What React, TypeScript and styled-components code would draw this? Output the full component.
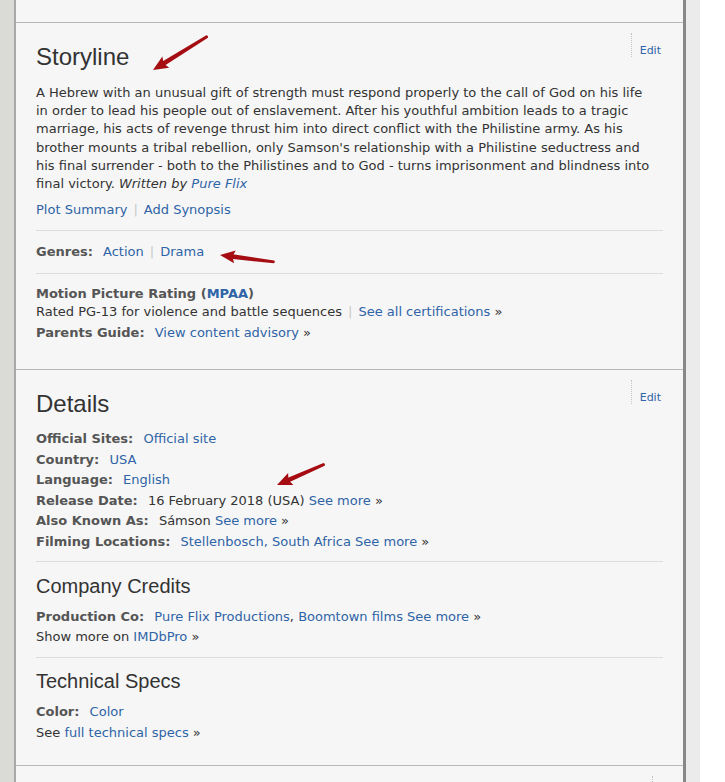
import React from "react";
import styled, { createGlobalStyle } from "styled-components";

const Global = createGlobalStyle`
  html, body { margin: 0; padding: 0; background: #ffffff; overflow: hidden; }
  body { font-family: Verdana, "DejaVu Sans", sans-serif; font-size: 13px; color: #333; }
  #root { width: 725px; height: 782px; }
`;

const Page = styled.div`
  position: relative;
  display: flex;
  width: 700px;
  height: 782px;
  overflow: hidden;
`;

const Gutter = styled.div<{ $side: "left" | "right" }>`
  flex: none;
  width: 14px;
  background: ${(p) => (p.$side === "left" ? "#dadad6" : "#ebebeb")};
`;

const Main = styled.main`
  flex: none;
  width: 667px;
  background: #f6f6f6;
  border-left: 2px solid #a8a8a8;
  border-right: 3px solid #878787;
`;

const Stub = styled.div`
  height: 22px;
  border-bottom: 1px solid #b8b8b8;
`;

const Section = styled.section<{ $pb: number }>`
  padding: 10px 20px ${(p) => p.$pb}px;
  border-bottom: 1px solid #b8b8b8;
`;

const Header = styled.div`
  display: flex;
  justify-content: space-between;
  align-items: flex-start;
`;

const Title = styled.h2`
  margin: 10px 0 0;
  font-family: Arial, "Liberation Sans", sans-serif;
  font-weight: normal;
  font-size: 24px;
  line-height: 28px;
  color: #333;
`;

const SubTitle = styled.h3`
  margin: 0;
  font-family: Arial, "Liberation Sans", sans-serif;
  font-weight: normal;
  font-size: 20px;
  line-height: 24px;
  color: #333;
`;

const Edit = styled.a`
  display: block;
  height: 24px;
  box-sizing: border-box;
  padding: 11px 2px 0 8px;
  margin-left: auto;
  border-left: 1px dotted #c4c4c4;
  font-size: 11px;
  line-height: 14px;
  color: #2f64a6;
  text-decoration: none;
  overflow: hidden;
`;

const Para = styled.p<{ $mt: number }>`
  margin: ${(p) => p.$mt}px 0 0;
  line-height: 18.2px;
`;

const Link = styled.a<{ $bold?: boolean }>`
  color: #2f64a6;
  text-decoration: none;
  font-weight: ${(p) => (p.$bold ? "bold" : "inherit")};
`;

const Sep = styled.span`
  color: #c8c8c8;
  padding: 0 6px;
`;

const Divider = styled.hr<{ $mt: number; $mb: number }>`
  border: 0;
  border-top: 1px solid #dddddd;
  height: 0;
  margin: ${(p) => p.$mt}px 0 ${(p) => p.$mb}px;
`;

const Label = styled.span`
  font-weight: bold;
  color: #555;
  margin-right: 6px;
`;

const BlockLabel = styled.h4`
  margin: 0;
  font-size: 13px;
  line-height: 18.2px;
  font-weight: bold;
  color: #555;
`;

const Rows = styled.div<{ $mt: number }>`
  margin-top: ${(p) => p.$mt}px;
  display: flex;
  flex-direction: column;
`;

const Row = styled.div`
  line-height: 20.6px;
  white-space: nowrap;
`;

const Raquo = styled.span`
  color: #333;
`;

const ArrowLayer = styled.svg`
  position: absolute;
  left: 0;
  top: 0;
  pointer-events: none;
`;

type Pt = { x: number; y: number };

function Arrow({ tip, tail }: { tip: Pt; tail: Pt }) {
  const dx = tail.x - tip.x;
  const dy = tail.y - tip.y;
  const L = Math.sqrt(dx * dx + dy * dy);
  const ang = (Math.atan2(dy, dx) * 180) / Math.PI;
  return (
    <g transform={`translate(${tip.x} ${tip.y}) rotate(${ang})`}>
      <polygon
        points={`11,-2.4 ${L - 1},-1.5 ${L},0 ${L - 1},1.5 11,2.4`}
        fill="#a50d12"
      />
      <polygon points="0,0 15,-6.5 12.5,0 15,6.5" fill="#a50d12" />
    </g>
  );
}

const label = (t: string) => <Label>{t}</Label>;

const storyLines = [
  "A Hebrew with an unusual gift of strength must respond properly to the call of God on his life",
  "in order to lead his people out of enslavement. After his youthful ambition leads to a tragic",
  "marriage, his acts of revenge thrust him into direct conflict with the Philistine army. As his",
  "brother mounts a tribal rebellion, only Samson's relationship with a Philistine seductress and",
  "his final surrender - both to the Philistines and to God - turns imprisonment and blindness into",
];

export default function App() {
  return (
    <>
      <Global />
      <Page>
        <Gutter $side="left" />
        <Main>
          <Stub />
          <Section $pb={27}>
            <Header>
              <Title>Storyline</Title>
              <Edit>Edit</Edit>
            </Header>
            <Para $mt={13}>
              {storyLines.map((l) => (
                <React.Fragment key={l}>
                  {l}
                  <br />
                </React.Fragment>
              ))}
              final victory. <em>Written by <Link>Pure Flix</Link></em>
            </Para>
            <Para $mt={8}>
              <Link>Plot Summary</Link>
              <Sep>|</Sep>
              <Link>Add Synopsis</Link>
            </Para>
            <Divider $mt={11} $mb={12} />
            <Para $mt={0}>
              {label("Genres:")} <Link>Action</Link>
              <Sep>|</Sep>
              <Link>Drama</Link>
            </Para>
            <Divider $mt={11} $mb={11} />
            <BlockLabel>
              Motion Picture Rating (<Link $bold>MPAA</Link>)
            </BlockLabel>
            <Para $mt={0}>
              Rated PG-13 for violence and battle sequences
              <Sep>|</Sep>
              <Link>See all certifications</Link> <Raquo>»</Raquo>
            </Para>
            <Para $mt={3}>
              {label("Parents Guide:")} <Link>View content advisory</Link> <Raquo>»</Raquo>
            </Para>
          </Section>

          <Section $pb={21}>
            <Header>
              <Title>Details</Title>
              <Edit>Edit</Edit>
            </Header>
            <Rows $mt={10.7}>
              <Row>
                {label("Official Sites:")} <Link>Official site</Link>
              </Row>
              <Row>
                {label("Country:")} <Link>USA</Link>
              </Row>
              <Row>
                {label("Language:")} <Link>English</Link>
              </Row>
              <Row>
                {label("Release Date:")} 16 February 2018 (USA) <Link>See more</Link> <Raquo>»</Raquo>
              </Row>
              <Row>
                {label("Also Known As:")} Sámson <Link>See more</Link> <Raquo>»</Raquo>
              </Row>
              <Row>
                {label("Filming Locations:")} <Link>Stellenbosch, South Africa</Link> <Link>See more</Link>{" "}
                <Raquo>»</Raquo>
              </Row>
            </Rows>
            <Divider $mt={9} $mb={12} />
            <SubTitle>Company Credits</SubTitle>
            <Rows $mt={8.4}>
              <Row>
                {label("Production Co:")} <Link>Pure Flix Productions</Link>, <Link>Boomtown films</Link>{" "}
                <Link>See more</Link> <Raquo>»</Raquo>
              </Row>
              <Row>
                Show more on <Link>IMDbPro</Link> <Raquo>»</Raquo>
              </Row>
            </Rows>
            <Divider $mt={9} $mb={11} />
            <SubTitle>Technical Specs</SubTitle>
            <Rows $mt={9.4}>
              <Row>
                {label("Color:")} <Link>Color</Link>
              </Row>
              <Row>
                See <Link>full technical specs</Link> <Raquo>»</Raquo>
              </Row>
            </Rows>
          </Section>

          <Section $pb={20}>
            <Header>
              <Edit aria-label="Edit" />
            </Header>
          </Section>
        </Main>
        <Gutter $side="right" />
        <ArrowLayer width="700" height="782" viewBox="0 0 700 782">
          <Arrow tip={{ x: 153, y: 70 }} tail={{ x: 208, y: 36 }} />
          <Arrow tip={{ x: 220, y: 255 }} tail={{ x: 275, y: 262 }} />
          <Arrow tip={{ x: 277, y: 485 }} tail={{ x: 325, y: 464 }} />
        </ArrowLayer>
      </Page>
    </>
  );
}
